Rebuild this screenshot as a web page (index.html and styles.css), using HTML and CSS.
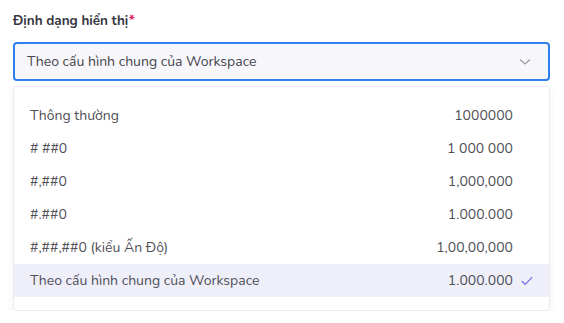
FILE: index.html
```html
<!DOCTYPE html>
<html lang="vi">
<head>
  <meta charset="UTF-8">
  <title>Định dạng hiển thị</title>
  <link rel="stylesheet" href="styles.css">
</head>
<body>

  <div class="field">
    <label class="field-label">Định dạng hiển thị<span class="req">*</span></label>

    <div class="select">
      <span class="select-value">Theo cấu hình chung của Workspace</span>
      <svg class="chevron" width="12" height="8" viewBox="0 0 12 8">
        <path d="M1 1.5 L6 6 L11 1.5" fill="none" stroke="#9a9aa2" stroke-width="1.2"/>
      </svg>
    </div>

    <ul class="menu">
      <li class="option"><span>Thông thường</span><span class="num">1000000</span></li>
      <li class="option"><span># ##0</span><span class="num">1 000 000</span></li>
      <li class="option"><span>#,##0</span><span class="num">1,000,000</span></li>
      <li class="option"><span>#.##0</span><span class="num">1.000.000</span></li>
      <li class="option"><span>#,##,##0 (kiểu Ấn Độ)</span><span class="num">1,00,00,000</span></li>
      <li class="option selected">
        <span>Theo cấu hình chung của Workspace</span>
        <span class="num">1.000.000</span>
        <svg class="check" width="12" height="10" viewBox="0 0 12 10">
          <path d="M0.8 5 L4.2 8.4 L11.2 1.2" fill="none" stroke="#6c6ce0" stroke-width="1.1"/>
        </svg>
      </li>
    </ul>
  </div>

</body>
</html>
```

FILE: styles.css
```css
body {
  margin: 0;
  padding: 12px 14px 0 13px;
  background: #fff;
  font-family: "Nunito", Lato, "Noto Sans", sans-serif;
  color: #3b3b44;
}

.field {
  width: 537px;
}

.field-label {
  display: block;
  font-size: 13.5px;
  font-weight: bold;
  color: #35353d;
  line-height: 18px;
  margin-bottom: 12px;
}

.req {
  color: #e0245e;
}

.select {
  display: flex;
  align-items: center;
  justify-content: space-between;
  height: 35px;
  padding: 0 17px 0 12px;
  border: 2px solid #2f80ed;
  border-radius: 4px;
  background: #f7f7fb;
  font-size: 14px;
  color: #44444c;
}

.menu {
  list-style: none;
  margin: 5px 0 0;
  padding: 12px 0 13px;
  background: #fff;
  border: 1px solid #ececf0;
  border-radius: 4px;
  box-shadow: 0 2px 8px rgba(0, 0, 0, 0.06);
}

.option {
  display: flex;
  align-items: center;
  height: 33px;
  padding: 0 36px 0 16px;
  font-size: 14px;
  color: #505058;
}

.option .num {
  margin-left: auto;
}

.option.selected {
  background: #efeffa;
  padding-right: 16px;
}

.check {
  margin-left: 8px;
}
```
